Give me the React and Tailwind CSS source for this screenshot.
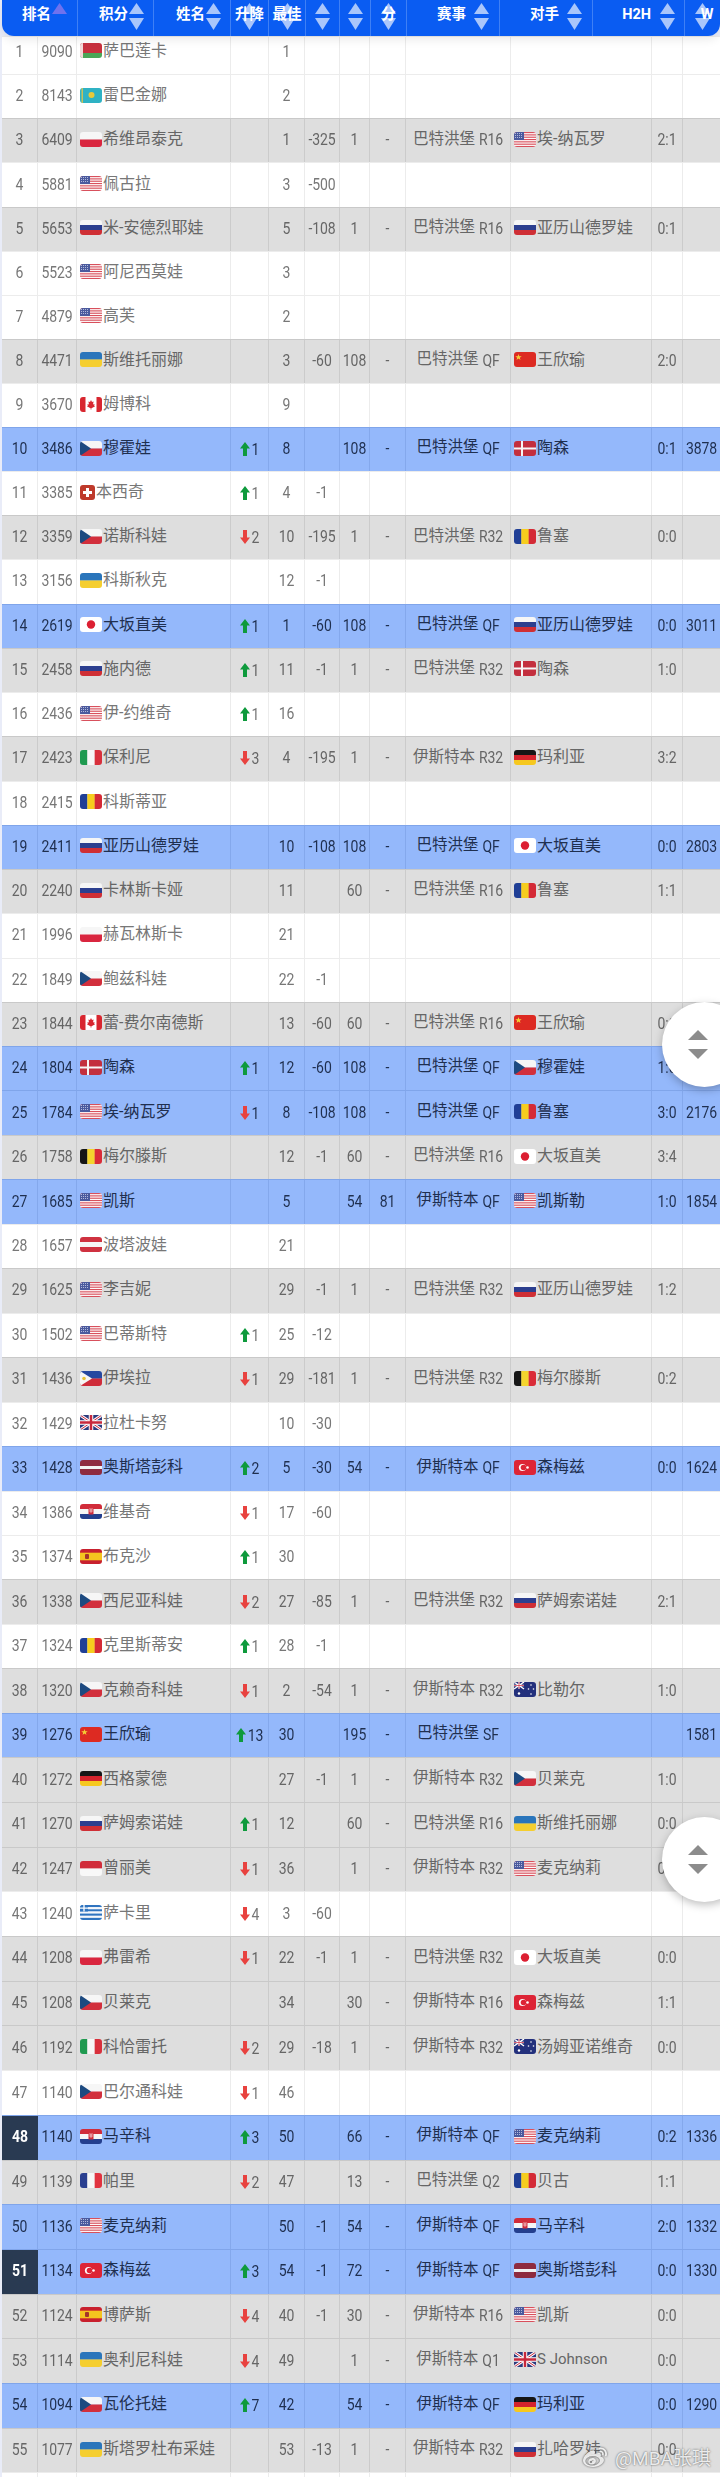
import { FaWeibo } from 'react-icons/fa'

// [tone, rank, points, flag, name, rise, best, minus, plus, bonus, tournament, oppFlag, opponent, h2h, win]
const ROWS = [
  ['w', 1, 9090, 'by', '萨巴莲卡', 0, 1],
  ['w', 2, 8143, 'kz', '雷巴金娜', 0, 2],
  ['g', 3, 6409, 'pl', '希维昂泰克', 0, 1, -325, 1, '-', '巴特洪堡 R16', 'us', '埃-纳瓦罗', '2:1'],
  ['w', 4, 5881, 'us', '佩古拉', 0, 3, -500],
  ['g', 5, 5653, 'ru', '米-安德烈耶娃', 0, 5, -108, 1, '-', '巴特洪堡 R16', 'ru', '亚历山德罗娃', '0:1'],
  ['w', 6, 5523, 'us', '阿尼西莫娃', 0, 3],
  ['w', 7, 4879, 'us', '高芙', 0, 2],
  ['g', 8, 4471, 'ua', '斯维托丽娜', 0, 3, -60, 108, '-', '巴特洪堡 QF', 'cn', '王欣瑜', '2:0'],
  ['w', 9, 3670, 'ca', '姆博科', 0, 9],
  ['b', 10, 3486, 'cz', '穆霍娃', 1, 8, '', 108, '-', '巴特洪堡 QF', 'dk', '陶森', '0:1', 3878],
  ['w', 11, 3385, 'ch', '本西奇', 1, 4, -1],
  ['g', 12, 3359, 'cz', '诺斯科娃', -2, 10, -195, 1, '-', '巴特洪堡 R32', 'ro', '鲁塞', '0:0'],
  ['w', 13, 3156, 'ua', '科斯秋克', 0, 12, -1],
  ['b', 14, 2619, 'jp', '大坂直美', 1, 1, -60, 108, '-', '巴特洪堡 QF', 'ru', '亚历山德罗娃', '0:0', 3011],
  ['g', 15, 2458, 'ru', '施内德', 1, 11, -1, 1, '-', '巴特洪堡 R32', 'dk', '陶森', '1:0'],
  ['w', 16, 2436, 'us', '伊-约维奇', 1, 16],
  ['g', 17, 2423, 'it', '保利尼', -3, 4, -195, 1, '-', '伊斯特本 R32', 'de', '玛利亚', '3:2'],
  ['w', 18, 2415, 'ro', '科斯蒂亚'],
  ['b', 19, 2411, 'ru', '亚历山德罗娃', 0, 10, -108, 108, '-', '巴特洪堡 QF', 'jp', '大坂直美', '0:0', 2803],
  ['g', 20, 2240, 'ru', '卡林斯卡娅', 0, 11, '', 60, '-', '巴特洪堡 R16', 'ro', '鲁塞', '1:1'],
  ['w', 21, 1996, 'pl', '赫瓦林斯卡', 0, 21],
  ['w', 22, 1849, 'cz', '鲍兹科娃', 0, 22, -1],
  ['g', 23, 1844, 'ca', '蕾-费尔南德斯', 0, 13, -60, 60, '-', '巴特洪堡 R16', 'cn', '王欣瑜', '0:1'],
  ['b', 24, 1804, 'dk', '陶森', 1, 12, -60, 108, '-', '巴特洪堡 QF', 'cz', '穆霍娃', '1:0'],
  ['b', 25, 1784, 'us', '埃-纳瓦罗', -1, 8, -108, 108, '-', '巴特洪堡 QF', 'ro', '鲁塞', '3:0', 2176],
  ['g', 26, 1758, 'be', '梅尔滕斯', 0, 12, -1, 60, '-', '巴特洪堡 R16', 'jp', '大坂直美', '3:4'],
  ['b', 27, 1685, 'us', '凯斯', 0, 5, '', 54, 81, '伊斯特本 QF', 'us', '凯斯勒', '1:0', 1854],
  ['w', 28, 1657, 'at', '波塔波娃', 0, 21],
  ['g', 29, 1625, 'us', '李吉妮', 0, 29, -1, 1, '-', '巴特洪堡 R32', 'ru', '亚历山德罗娃', '1:2'],
  ['w', 30, 1502, 'us', '巴蒂斯特', 1, 25, -12],
  ['g', 31, 1436, 'ph', '伊埃拉', -1, 29, -181, 1, '-', '巴特洪堡 R32', 'be', '梅尔滕斯', '0:2'],
  ['w', 32, 1429, 'gb', '拉杜卡努', 0, 10, -30],
  ['b', 33, 1428, 'lv', '奥斯塔彭科', 2, 5, -30, 54, '-', '伊斯特本 QF', 'tr', '森梅兹', '0:0', 1624],
  ['w', 34, 1386, 'hr', '维基奇', -1, 17, -60],
  ['w', 35, 1374, 'es', '布克沙', 1, 30],
  ['g', 36, 1338, 'cz', '西尼亚科娃', -2, 27, -85, 1, '-', '巴特洪堡 R32', 'ru', '萨姆索诺娃', '2:1'],
  ['w', 37, 1324, 'ro', '克里斯蒂安', 1, 28, -1],
  ['g', 38, 1320, 'cz', '克赖奇科娃', -1, 2, -54, 1, '-', '伊斯特本 R32', 'au', '比勒尔', '1:0'],
  ['b', 39, 1276, 'cn', '王欣瑜', 13, 30, '', 195, '-', '巴特洪堡 SF', '', '', '', 1581],
  ['g', 40, 1272, 'de', '西格蒙德', 0, 27, -1, 1, '-', '伊斯特本 R32', 'cz', '贝莱克', '1:0'],
  ['g', 41, 1270, 'ru', '萨姆索诺娃', 1, 12, '', 60, '-', '巴特洪堡 R16', 'ua', '斯维托丽娜', '0:0'],
  ['g', 42, 1247, 'id', '曾丽美', -1, 36, '', 1, '-', '伊斯特本 R32', 'us', '麦克纳莉', '0:0'],
  ['w', 43, 1240, 'gr', '萨卡里', -4, 3, -60],
  ['g', 44, 1208, 'pl', '弗雷希', -1, 22, -1, 1, '-', '巴特洪堡 R32', 'jp', '大坂直美', '0:0'],
  ['g', 45, 1208, 'cz', '贝莱克', 0, 34, '', 30, '-', '伊斯特本 R16', 'tr', '森梅兹', '1:1'],
  ['g', 46, 1192, 'it', '科恰雷托', -2, 29, -18, 1, '-', '伊斯特本 R32', 'au', '汤姆亚诺维奇', '0:0'],
  ['w', 47, 1140, 'cz', '巴尔通科娃', -1, 46],
  ['b', 48, 1140, 'hr', '马辛科', 3, 50, '', 66, '-', '伊斯特本 QF', 'us', '麦克纳莉', '0:2', 1336],
  ['g', 49, 1139, 'fr', '帕里', -2, 47, '', 13, '-', '巴特洪堡 Q2', 'ro', '贝古', '1:1'],
  ['b', 50, 1136, 'us', '麦克纳莉', 0, 50, -1, 54, '-', '伊斯特本 QF', 'hr', '马辛科', '2:0', 1332],
  ['b', 51, 1134, 'tr', '森梅兹', 3, 54, -1, 72, '-', '伊斯特本 QF', 'lv', '奥斯塔彭科', '0:0', 1330],
  ['g', 52, 1124, 'es', '博萨斯', -4, 40, -1, 30, '-', '伊斯特本 R16', 'us', '凯斯', '0:0'],
  ['g', 53, 1114, 'ua', '奥利尼科娃', -4, 49, '', 1, '-', '伊斯特本 Q1', 'gb', 'S Johnson', '0:0'],
  ['b', 54, 1094, 'cz', '瓦伦托娃', 7, 42, '', 54, '-', '伊斯特本 QF', 'de', '玛利亚', '0:0', 1290],
  ['g', 55, 1077, 'ua', '斯塔罗杜布采娃', 0, 53, -13, 1, '-', '伊斯特本 R32', 'ru', '扎哈罗娃', '0:0'],
]

const DARK_RANKS = [48, 51]

const TONE = {
  w: { row: 'bg-white text-[#777777] border-[#ececec]', cell: 'border-[#ececec]' },
  g: { row: 'bg-[#dedede] text-[#666666] border-[#c9c9c9]', cell: 'border-[#cbcbcb]' },
  b: { row: 'bg-[#94b8fb] text-[#1f2f4f] border-[#80a5ea]', cell: 'border-[#84a8ec]' },
}

// rows drift a little taller down the long screenshot
function rowHeight(rank) {
  if (rank === 1) return 'h-[38.3px]'
  if (rank <= 12) return 'h-[44.1px]'
  if (rank <= 24) return 'h-[44.25px]'
  if (rank <= 39) return 'h-[44.47px]'
  return 'h-[44.69px]'
}

const Usa = (
  <>
    <rect width="22" height="15" fill="#fff" />
    {[0, 2, 4, 6, 8, 10, 12].map((i) => <rect key={i} y={i * 1.16} width="22" height="1.16" fill="#d8505c" />)}
    <rect width="10" height="8" fill="#4a5a9e" />
    <path d="M1 1.5h8M1 3.5h8M1 5.5h8" stroke="#dfe3f5" strokeWidth=".7" strokeDasharray="1 1" />
  </>
)

const Uk = (
  <>
    <rect width="22" height="15" fill="#2b3a7d" />
    <path d="M0 0L22 15M22 0L0 15" stroke="#fff" strokeWidth="3" />
    <path d="M0 0L22 15M22 0L0 15" stroke="#c8283c" strokeWidth="1" />
    <path d="M11 0V15M0 7.5H22" stroke="#fff" strokeWidth="4.5" />
    <path d="M11 0V15M0 7.5H22" stroke="#c8283c" strokeWidth="2.5" />
  </>
)

const Bars = ({ colors, vertical }) => colors.map((c, i) => (
  vertical
    ? <rect key={i} x={(22 / colors.length) * i} width={22 / colors.length + 0.2} height="15" fill={c} />
    : <rect key={i} y={(15 / colors.length) * i} width="22" height={15 / colors.length + 0.2} fill={c} />
))

const FLAGS = {
  by: (
    <>
      <Bars colors={['#c8313e', '#c8313e', '#4aa657']} />
      <rect width="3" height="15" fill="#f3d9d9" />
    </>
  ),
  kz: (
    <>
      <rect width="22" height="15" fill="#2fb2c4" />
      <circle cx="11.5" cy="7" r="3" fill="#e8c93a" />
      <rect x="1.5" width="1.5" height="15" fill="#c7c25a" />
    </>
  ),
  pl: <Bars colors={['#f6f6f6', '#d9263f']} />,
  us: Usa,
  ru: <Bars colors={['#f6f6f6', '#2c3f8f', '#cf2f35']} />,
  ua: <Bars colors={['#2a75bb', '#f5ce2f']} />,
  ca: (
    <>
      <rect width="22" height="15" fill="#fff" />
      <rect width="5.5" height="15" fill="#d8262f" />
      <rect x="16.5" width="5.5" height="15" fill="#d8262f" />
      <path d="M11 3l1 2 1.6-.6-.6 3 1.6-.4-.5 1.6 1 .6L12 11h-.6v1.5h-.8V11H10L6.9 9.2l1-.6-.5-1.6 1.6.4-.6-3 1.6.6z" fill="#d8262f" />
    </>
  ),
  cz: (
    <>
      <Bars colors={['#f6f6f6', '#d22f3c']} />
      <path d="M0 0L11 7.5L0 15z" fill="#1d4a80" />
    </>
  ),
  jp: (
    <>
      <rect width="22" height="15" fill="#fff" />
      <circle cx="11" cy="7.5" r="4.2" fill="#dc1f32" />
    </>
  ),
  it: <Bars vertical colors={['#1f9a50', '#f6f6f6', '#d8303c']} />,
  ro: <Bars vertical colors={['#203f96', '#f6cd1e', '#d42a36']} />,
  dk: (
    <>
      <rect width="22" height="15" fill="#c32f3e" />
      <path d="M8 0V15M0 7.5H22" stroke="#f6f6f6" strokeWidth="2" />
    </>
  ),
  be: <Bars vertical colors={['#161616', '#f4d52e', '#da2c38']} />,
  at: <Bars colors={['#cf3240', '#f6f6f6', '#cf3240']} />,
  ph: (
    <>
      <Bars colors={['#2548a0', '#cf2c3a']} />
      <path d="M0 0L12 7.5L0 15z" fill="#f6f6f6" />
      <circle cx="4" cy="7.5" r="1.8" fill="#e8c23a" />
    </>
  ),
  gb: Uk,
  lv: <Bars colors={['#8e2b3f', '#8e2b3f', '#f2f2f2', '#8e2b3f', '#8e2b3f']} />,
  hr: (
    <>
      <Bars colors={['#d12c3a', '#f6f6f6', '#243f8e']} />
      <rect x="8.5" y="3.5" width="5" height="7" fill="#d12c3a" />
      <path d="M9.5 4.5h1v1h-1zM11.5 4.5h1v1h-1zM10.5 5.5h1v1h-1zM9.5 6.5h1v1h-1zM11.5 6.5h1v1h-1zM10.5 7.5h1v1h-1z" fill="#fff" />
    </>
  ),
  es: (
    <>
      <rect width="22" height="15" fill="#c8202e" />
      <rect y="3.7" width="22" height="7.6" fill="#f4c41f" />
      <rect x="5" y="5" width="4" height="5" rx="1" fill="#a5342a" />
    </>
  ),
  cn: (
    <>
      <rect width="22" height="15" fill="#dd2a22" />
      <path d="M4.5 2l.8 2.3h2.4l-1.9 1.4.7 2.3-2-1.4-2 1.4.7-2.3L1.3 4.3h2.4z" fill="#f4cf36" />
    </>
  ),
  de: <Bars colors={['#161616', '#d4232c', '#f6c81f']} />,
  id: <Bars colors={['#d12c3a', '#f8f8f8']} />,
  gr: (
    <>
      <Bars colors={['#2f74c0', '#f5f7fb', '#2f74c0', '#f5f7fb', '#2f74c0', '#f5f7fb', '#2f74c0']} />
      <rect width="8" height="6.5" fill="#2f74c0" />
      <path d="M4 0V6.5M0 3.2H8" stroke="#fff" strokeWidth="1.3" />
    </>
  ),
  fr: <Bars vertical colors={['#2a3f90', '#f6f6f6', '#e13340']} />,
  tr: (
    <>
      <rect width="22" height="15" fill="#dd2436" />
      <circle cx="8.5" cy="7.5" r="3.6" fill="#fff" />
      <circle cx="9.5" cy="7.5" r="2.8" fill="#dd2436" />
      <circle cx="13.5" cy="7.5" r="1.3" fill="#fff" />
    </>
  ),
  au: (
    <>
      <rect width="22" height="15" fill="#23307c" />
      <path d="M0 0L10 7M10 0L0 7M5 0V7M0 3.5H10" stroke="#fff" strokeWidth="1.4" />
      <path d="M5 0V7M0 3.5H10" stroke="#c8283c" strokeWidth=".7" />
      <circle cx="5" cy="11.5" r="1.2" fill="#fff" />
      <circle cx="17" cy="3" r=".8" fill="#fff" />
      <circle cx="14.5" cy="7" r=".8" fill="#fff" />
      <circle cx="19.5" cy="7" r=".8" fill="#fff" />
      <circle cx="17" cy="12" r=".8" fill="#fff" />
    </>
  ),
}

function Flag({ code }) {
  if (code === 'ch') {
    return (
      <svg viewBox="0 0 15 15" className="w-[15px] h-[15px] rounded-[3px] shrink-0">
        <rect width="15" height="15" fill="#bf3a2b" />
        <path d="M7.5 3V12M3 7.5H12" stroke="#fff" strokeWidth="3" />
      </svg>
    )
  }
  return (
    <svg viewBox="0 0 22 15" className="w-[22px] h-[15px] rounded-[3px] shrink-0">
      {FLAGS[code]}
    </svg>
  )
}

// digits in the picture are tall and narrow
function Num({ children, className = '' }) {
  return <span className={`inline-block text-[14px] leading-none tracking-[-0.1px] scale-y-[1.2] ${className}`}>{children}</span>
}

function Rise({ value }) {
  if (!value) return null
  const up = value > 0
  return (
    <div className="flex items-center gap-[2px] mt-[2px]">
      <svg viewBox="0 0 10 14" className="w-[10px] h-[14px]">
        {up
          ? <path d="M5 0L10 6.5H7V14H3V6.5H0z" fill="#0e9a3c" />
          : <path d="M5 14L0 7.5H3V0H7V7.5H10z" fill="#e8423f" />}
      </svg>
      <Num>{Math.abs(value)}</Num>
    </div>
  )
}

function Player({ code, name }) {
  if (!code) return null
  const latin = /^[A-Za-z ]+$/.test(name)
  return (
    <div className="flex items-center gap-[1px] min-w-0">
      <Flag code={code} />
      {latin
        ? <span className="text-[15px] whitespace-nowrap">{name}</span>
        : <span className="text-[16px] leading-none whitespace-nowrap">{name}</span>}
    </div>
  )
}

function Tournament({ text }) {
  if (!text) return null
  const [place, round] = text.split(' ')
  return (
    <div className="flex items-center">
      <span className="text-[15.5px] leading-none">{place}</span>
      <Num className="ml-[4px]">{round}</Num>
    </div>
  )
}

function Row({ data }) {
  const [tone, rank, points, flag, name, rise, best, minus, plus, bonus, tournament, oppFlag, opponent, h2h, win] = data
  const t = TONE[tone]
  const dark = DARK_RANKS.includes(rank)
  const pad = rank === 1 ? 'pb-[10px]' : 'pb-[3px]'
  const center = `flex items-center justify-center border-r ${t.cell} ${pad}`
  const left = `flex items-center pl-[3px] border-r ${t.cell} ${pad}`
  return (
    <div className={`grid grid-cols-[36px_39px_154px_38px_36px_35px_30px_36px_105px_141px_31px_37px] border-t ${t.row} ${rowHeight(rank)}`}>
      <div className={dark ? `flex items-center justify-center bg-[#293a52] text-white font-bold ${pad}` : center}>
        {rank <= 55 && <Num>{rank}</Num>}
      </div>
      <div className={center}><Num>{points}</Num></div>
      <div className={left}><Player code={flag} name={name} /></div>
      <div className={center}><Rise value={rise} /></div>
      <div className={center}>{best ? <Num>{best}</Num> : null}</div>
      <div className={center}><Num>{minus}</Num></div>
      <div className={center}><Num>{plus}</Num></div>
      <div className={center}><Num>{bonus}</Num></div>
      <div className={center}><Tournament text={tournament} /></div>
      <div className={left}><Player code={oppFlag} name={opponent} /></div>
      <div className={center}><Num>{h2h}</Num></div>
      <div className={`flex items-center justify-center ${pad}`}><Num>{win}</Num></div>
    </div>
  )
}

function SortArrows({ only, overlay }) {
  const svg = (
    <svg viewBox="0 0 15 28" className="w-[15px] h-[28px]">
      {only
        ? <path d="M7.5 0L15 11H0z" fill="#6f72ee" />
        : (
          <>
            <path d="M7.5 0L15 11H0z" fill="#ffffff" fillOpacity=".65" />
            <path d="M0 15H15L7.5 27z" fill="#ffffff" fillOpacity=".65" />
          </>
        )}
    </svg>
  )
  if (overlay) return <div className="absolute inset-0 flex items-center justify-center pb-[2px]">{svg}</div>
  return <div className="pb-[2px]">{svg}</div>
}

const HEAD = [
  { label: '排名', pr: 'pr-[10px]', only: true },
  { label: '积分', pr: 'pr-[9px]' },
  { label: '姓名', pr: 'pr-[9px]' },
  { label: '升降', overlay: true },
  { label: '最佳', overlay: true },
  { label: '', overlay: true },
  { label: '', overlay: true },
  { label: '分', overlay: true },
  { label: '赛事', pr: 'pr-[10px]', gap: 'gap-[8px]' },
  { label: '对手', pr: 'pr-[10px]', gap: 'gap-[8px]' },
  { label: 'H2H', pr: 'pr-[9px]', gap: 'gap-[9px]' },
  { label: 'W', overlay: true, pl: 'pl-[9px]' },
]

function Header() {
  return (
    <div className="relative z-10 h-[36px] grid grid-cols-[76px_76px_77px_38px_37px_34px_31px_36px_93px_93px_92px_35px] bg-[#0a5cf2] rounded-b-[12px] shadow-[0_4px_10px_rgba(0,0,0,0.08)] text-white font-bold text-[14.5px]">
      {HEAD.map((h, i) => (
        <div
          key={i}
          className={`relative flex items-center ${h.overlay ? 'justify-center' : 'justify-end'} ${h.pr || ''} ${h.pl || ''} ${h.gap || 'gap-[1px]'} ${i < HEAD.length - 1 ? 'border-r border-[#3f80f5]' : ''}`}
        >
          {h.label && <span className="pb-[6px] leading-none whitespace-nowrap">{h.label}</span>}
          <SortArrows only={h.only} overlay={h.overlay} />
        </div>
      ))}
    </div>
  )
}

function ScrollButton({ className }) {
  return (
    <div className={`absolute left-[662px] w-[85px] h-[85px] rounded-full bg-white shadow-[0_3px_8px_rgba(0,0,0,0.25)] z-20 pl-[26px] flex flex-col justify-center gap-[9px] ${className}`}>
      <svg viewBox="0 0 20 10" className="w-[20px] h-[10px]"><path d="M10 0L20 10H0z" fill="#8c8c8c" /></svg>
      <svg viewBox="0 0 20 10" className="w-[20px] h-[10px]"><path d="M0 0H20L10 10z" fill="#8c8c8c" /></svg>
    </div>
  )
}

export default function App() {
  return (
    <div className="relative w-[720px] h-[2477px] overflow-hidden bg-[#e9ecf8] pl-[2px] font-['Roboto','Noto_Sans_CJK_SC',sans-serif]">
      <Header />
      {ROWS.map((r) => <Row key={r[1]} data={r} />)}
      <Row data={['w', 56]} />

      <ScrollButton className="top-[1002px]" />
      <ScrollButton className="top-[1817px]" />

      <div className="absolute left-[582px] top-[2446px] z-20 flex items-center gap-[7px] text-white/85 [text-shadow:0_0_2px_rgba(0,0,0,0.7)]">
        <FaWeibo className="w-[26px] h-[24px] drop-shadow-[0_0_1px_rgba(0,0,0,0.8)]" />
        <span className="text-[19px] leading-none whitespace-nowrap">@MBA张琪</span>
      </div>
    </div>
  )
}
